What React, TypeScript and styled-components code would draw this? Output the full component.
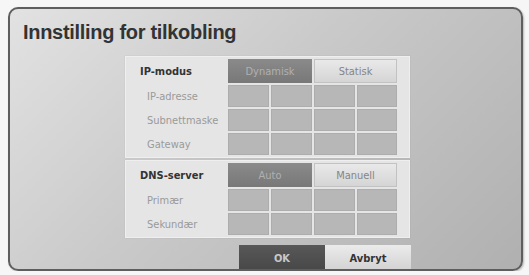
import React from 'react';
import styled, { createGlobalStyle, css } from 'styled-components';

const GlobalStyle = createGlobalStyle`
    html, body {
        margin: 0;
        padding: 0;
        background: #f6f6f6;
    }
    body {
        font-family: 'DejaVu Sans Condensed', 'DejaVu Sans', 'Liberation Sans', sans-serif;
    }
`;

const StyledDialog = styled.div`
    box-sizing: border-box;
    width: 515px;
    height: 264px;
    margin: 7px 0 0 8px;
    border: 2px solid #5e5e5e;
    border-radius: 10px;
    background: linear-gradient(135deg, #e2e2e2 0%, #c9c9c9 45%, #b0b0b0 100%);
    box-shadow: 1px 1px 2px rgba(0, 0, 0, 0.25);
    display: flex;
    flex-direction: column;
    overflow: hidden;
`;

const StyledTitle = styled.h1`
    margin: 11px 0 0 13px;
    font-family: 'Liberation Sans', Arial, sans-serif;
    font-weight: bold;
    font-size: 20px;
    line-height: 24px;
    letter-spacing: -0.3px;
    color: #333;
`;

const StyledPanel = styled.div`
    display: flex;
    flex-direction: column;
    gap: 2px;
    margin: 12px 0 0 115px;
    width: 285px;
`;

const StyledSection = styled.div`
    box-sizing: border-box;
    display: grid;
    grid-template-columns: 100px 41px 41px 41px 40px;
    grid-auto-rows: 22px;
    grid-template-rows: 24px;
    column-gap: 2px;
    row-gap: 2px;
    padding: 2px 14px 2px 0;
    background: #e5e5e5;
    border: 1px solid #efefef;
    box-shadow: 0 0 1px rgba(0, 0, 0, 0.15);
`;

const StyledLabel = styled.div<{ $main?: boolean }>`
    grid-column: 1;
    display: flex;
    align-items: center;
    font-size: 11px;
    ${(props) =>
        props.$main
            ? css`
                  padding-left: 14px;
                  font-weight: bold;
                  color: #333;
              `
            : css`
                  padding-left: 21px;
                  color: #9a9a9a;
              `}
`;

const StyledToggle = styled.div<{ $active?: boolean }>`
    grid-column: span 2;
    display: flex;
    justify-content: center;
    align-items: center;
    font-size: 11px;
    ${(props) =>
        props.$active
            ? css`
                  background: linear-gradient(#8a8a8a, #787878);
                  color: #b0b0b0;
              `
            : css`
                  background: linear-gradient(#eaeaea, #d4d4d4);
                  color: #858585;
                  box-shadow: inset 0 0 0 1px #c2c2c2;
              `}
`;

const StyledCell = styled.div`
    background: #b7b7b7;
    box-shadow: inset 0 0 0 1px #adadad;
`;

const StyledFooter = styled.div`
    display: flex;
    justify-content: flex-end;
    margin: 7px 110px 0 0;
`;

const StyledButton = styled.div<{ $active?: boolean }>`
    width: 86px;
    height: 26px;
    display: flex;
    justify-content: center;
    align-items: center;
    font-size: 11px;
    font-weight: bold;
    ${(props) =>
        props.$active
            ? css`
                  background: linear-gradient(#585858, #474747);
                  color: #c8c8c8;
              `
            : css`
                  background: linear-gradient(#ebebeb, #d2d2d2);
                  color: #333;
              `}
`;

type FieldRow = { label: string };
type SectionProps = {
    title: string;
    options: [string, string];
    active: number;
    rows: FieldRow[];
};

function Section({ title, options, active, rows }: SectionProps) {
    return (
        <StyledSection>
            <StyledLabel $main>{title}</StyledLabel>
            {options.map((option, i) => (
                <StyledToggle key={option} $active={i === active}>
                    {option}
                </StyledToggle>
            ))}
            {rows.map((row) => (
                <React.Fragment key={row.label}>
                    <StyledLabel>{row.label}</StyledLabel>
                    <StyledCell />
                    <StyledCell />
                    <StyledCell />
                    <StyledCell />
                </React.Fragment>
            ))}
        </StyledSection>
    );
}

export default function App() {
    return (
        <>
            <GlobalStyle />
            <StyledDialog>
                <StyledTitle>Innstilling for tilkobling</StyledTitle>
                <StyledPanel>
                    <Section
                        title="IP-modus"
                        options={['Dynamisk', 'Statisk']}
                        active={0}
                        rows={[{ label: 'IP-adresse' }, { label: 'Subnettmaske' }, { label: 'Gateway' }]}
                    />
                    <Section
                        title="DNS-server"
                        options={['Auto', 'Manuell']}
                        active={0}
                        rows={[{ label: 'Primær' }, { label: 'Sekundær' }]}
                    />
                </StyledPanel>
                <StyledFooter>
                    <StyledButton $active>OK</StyledButton>
                    <StyledButton>Avbryt</StyledButton>
                </StyledFooter>
            </StyledDialog>
        </>
    );
}
